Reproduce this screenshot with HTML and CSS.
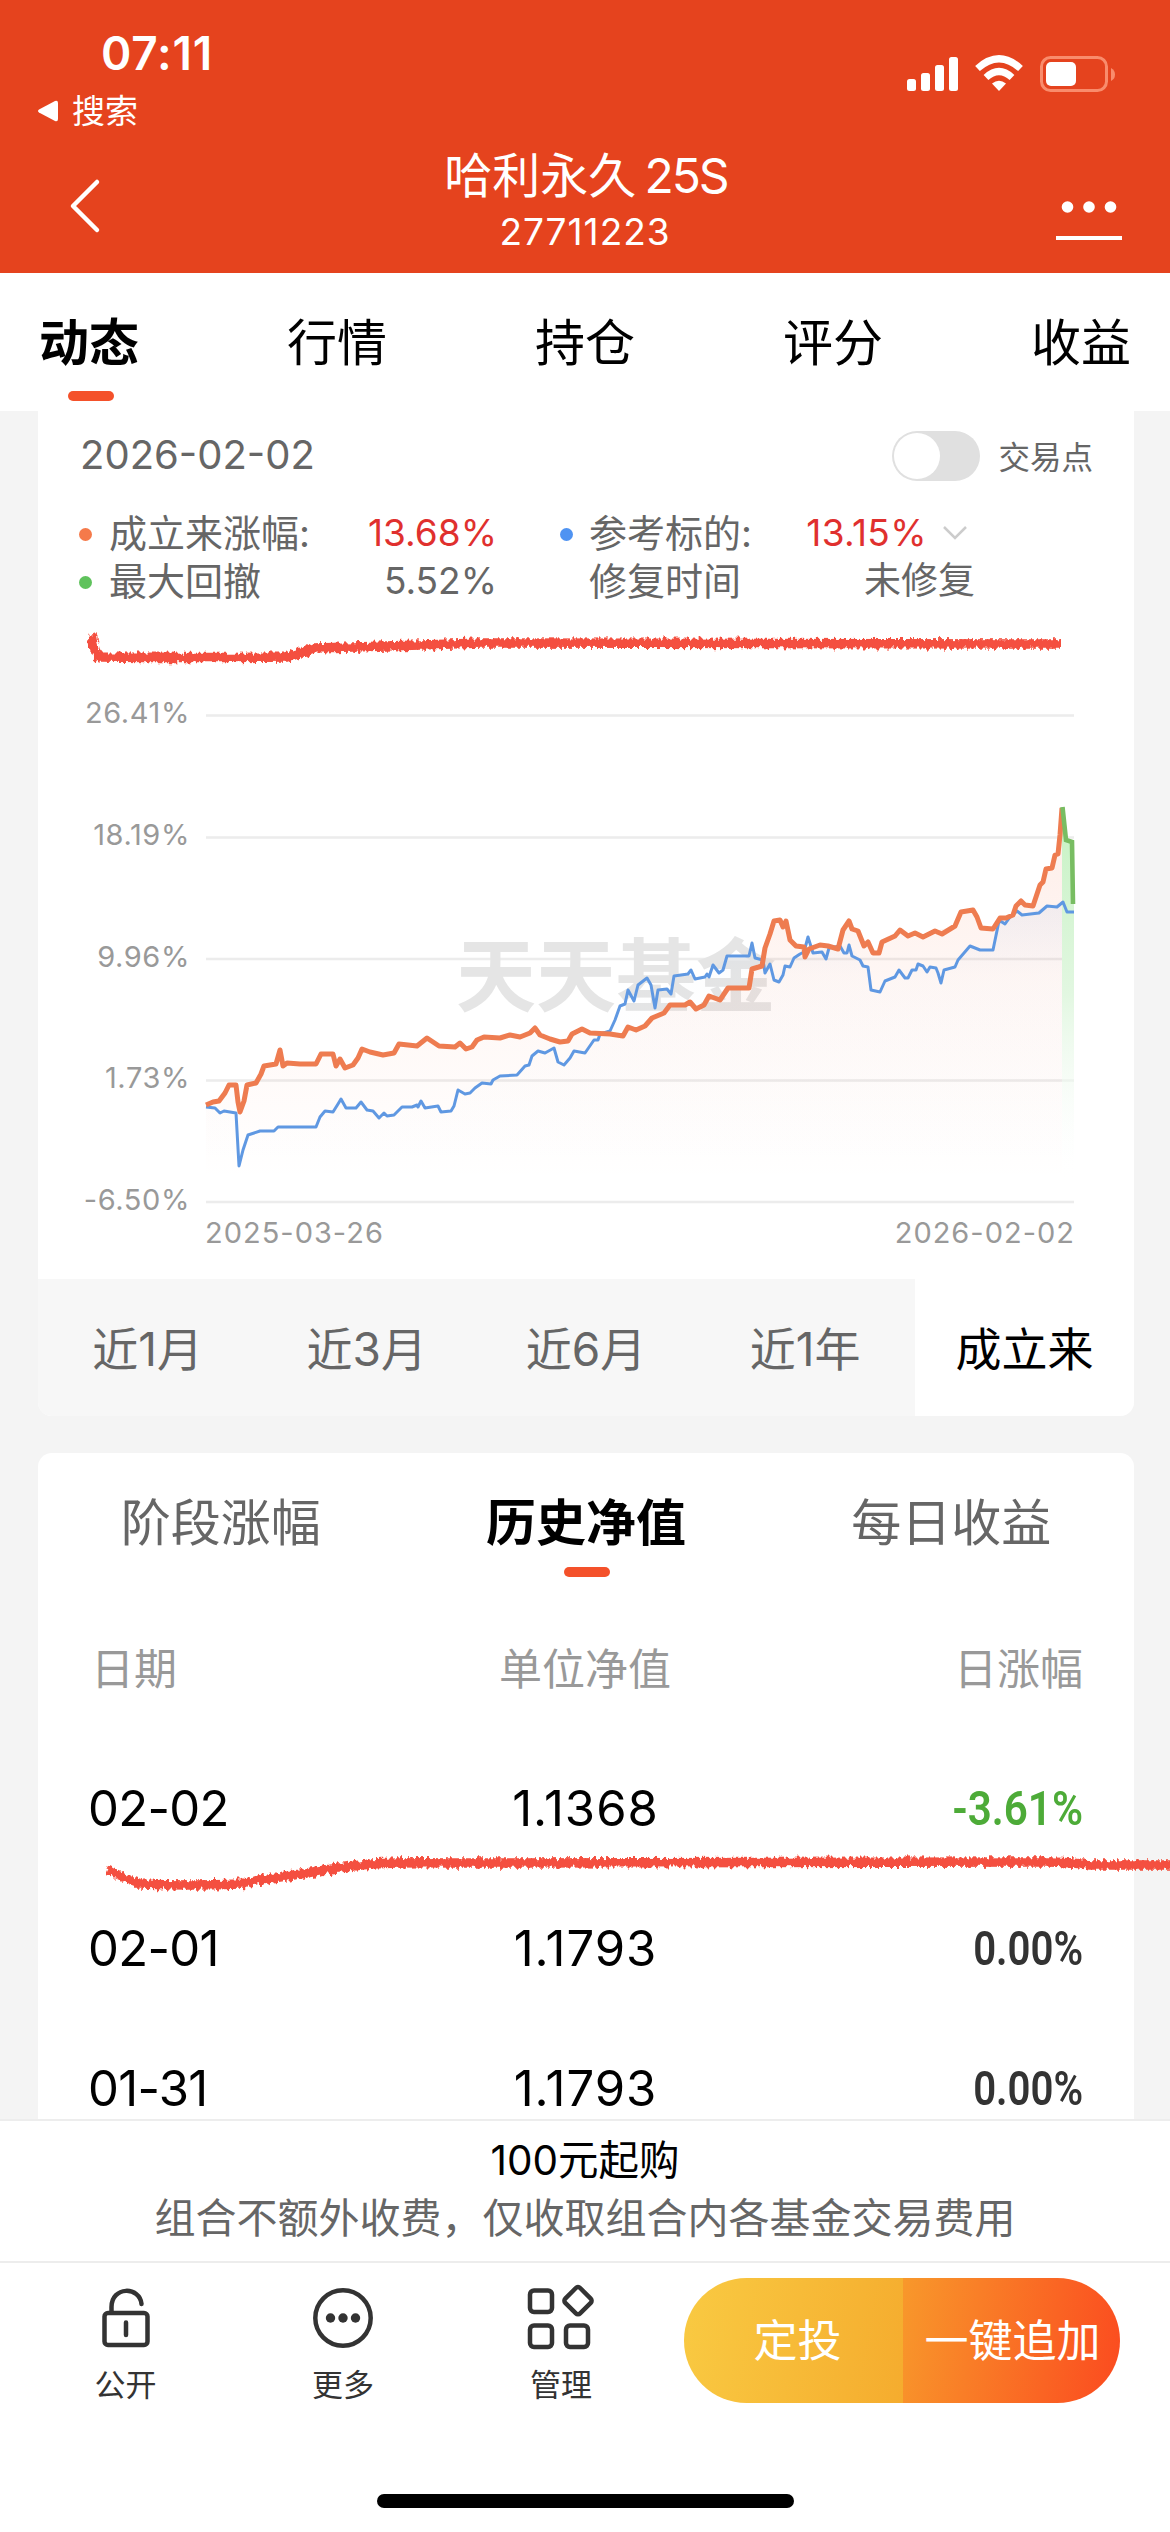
FILE: index.html
```html
<!DOCTYPE html>
<html lang="zh-CN">
<head>
<meta charset="utf-8">
<title>哈利永久 25S</title>
<link rel="stylesheet" href="styles.css">
</head>
<body>
<header class="header">
  <div class="statusbar">
    <div class="status-left">
      <div class="time"><span>07:11</span></div>
      <div class="return-app">
        <svg width="22" height="22" viewBox="0 0 22 22"><path d="M2 9.5 18 1q3-1 3 2v16q0 3-3 2L2 12.500q-2-1.500 0-3z" fill="#fff"/></svg>
        <span>搜索</span>
      </div>
    </div>
    <svg class="status-icons" width="210" height="40" viewBox="906 54 210 40">
      <g fill="#fff">
        <rect x="907" y="79" width="9" height="12" rx="2.500"/>
        <rect x="921" y="73" width="9" height="18" rx="2.500"/>
        <rect x="935" y="65" width="9" height="26" rx="2.500"/>
        <rect x="949" y="57" width="9" height="34" rx="2.500"/>
        <path d="M999 91l-7-7.500q7-5.500 14 0z"/>
      </g>
      <g fill="none" stroke="#fff" stroke-width="7">
        <path d="M977.500 68.500q21.500-19.500 43 0"/>
        <path d="M986 77.500q13-12 26 0"/>
      </g>
      <rect x="1041.500" y="57.500" width="65" height="33" rx="9" fill="none" stroke="#f98c6c" stroke-width="3"/>
      <rect x="1046" y="62" width="30" height="24" rx="5" fill="#fff"/>
      <path d="M1111 68q4 2 4 6.500t-4 6.500z" fill="#f98c6c"/>
    </svg>
  </div>
  <div class="navbar">
    <svg class="back" width="36" height="56" viewBox="0 0 36 56"><path d="M30 4 6 28l24 24" fill="none" stroke="#fff" stroke-width="4.500" stroke-linecap="round" stroke-linejoin="round"/></svg>
    <div class="heading">
      <h1><span>哈利永久</span><span class="n-title">25S</span></h1>
      <p><span class="n-code">27711223</span></p>
    </div>
    <svg class="more" width="66" height="42" viewBox="0 0 66 42"><g fill="#fff"><circle cx="11.500" cy="8" r="5.800"/><circle cx="33" cy="8" r="5.800"/><circle cx="54.500" cy="8" r="5.800"/><rect y="37" width="66" height="4"/></g></svg>
  </div>
</header>

<nav class="tabs">
  <a class="tab active">动态</a><a class="tab">行情</a><a class="tab">持仓</a><a class="tab">评分</a><a class="tab">收益</a>
</nav>

<main class="content">
  <section class="card trend">
    <div class="trend-top">
      <span class="n-date">2026-02-02</span>
      <div class="switch-wrap"><i class="switch"></i><span class="switch-label">交易点</span></div>
    </div>
    <div class="legend">
      <i class="dot orange"></i><span>成立来涨幅:</span><b class="num red"><span>13.68%</span></b>
      <i class="dot blue"></i><span>参考标的:</span><b class="num red ref"><span>13.15%</span><svg width="26" height="16" viewBox="0 0 26 16"><path d="M2 2l11 11L24 2" fill="none" stroke="#ccc" stroke-width="2.500"/></svg></b>
      <i class="dot green"></i><span>最大回撤</span><b class="num"><span>5.52%</span></b>
      <i></i><span>修复时间</span><b class="num">未修复</b>
    </div>
    <svg class="chart" width="1096" height="669" viewBox="38 610 1096 669">
      <defs>
        <linearGradient id="fillOrange" gradientUnits="userSpaceOnUse" x1="0" y1="808" x2="0" y2="1180"><stop offset="0" stop-color="#f7815a" stop-opacity=".14"/><stop offset=".5" stop-color="#f7815a" stop-opacity=".06"/><stop offset="1" stop-color="#f7815a" stop-opacity="0"/></linearGradient>
        <linearGradient id="fillBlue" gradientUnits="userSpaceOnUse" x1="0" y1="900" x2="0" y2="1200"><stop offset="0" stop-color="#5a95e8" stop-opacity=".08"/><stop offset=".25" stop-color="#5a95e8" stop-opacity=".01"/><stop offset="1" stop-color="#5a95e8" stop-opacity="0"/></linearGradient>
        <linearGradient id="fillGreen" gradientUnits="userSpaceOnUse" x1="0" y1="808" x2="0" y2="1180"><stop offset="0" stop-color="#c6f2c3"/><stop offset=".5" stop-color="#e2f7e1"/><stop offset="1" stop-color="#fff" stop-opacity="0"/></linearGradient>
        <filter id="crayon" filterUnits="userSpaceOnUse" x="38" y="600" width="1140" height="1300"><feTurbulence type="fractalNoise" baseFrequency=".3 .1" numOctaves="2" seed="4"/><feDisplacementMap in="SourceGraphic" scale="9" xChannelSelector="R" yChannelSelector="G"/><feGaussianBlur stdDeviation=".7"/></filter>
      </defs>
      <g stroke="#ececec" stroke-width="2.500"><path d="M206 715.500H1074M206 837.500H1074M206 959H1074M206 1080.500H1074M206 1202H1074"/></g>
      <g class="axis">
        <g text-anchor="end"><text x="190" y="723">26.41%</text><text x="190" y="845">18.19%</text><text x="190" y="966.500">9.96%</text><text x="190" y="1088">1.73%</text><text x="190" y="1210">-6.50%</text></g>
        <text x="205" y="1242.500" class="ax-date">2025-03-26</text><text x="1075" y="1242.500" text-anchor="end" class="ax-date">2026-02-02</text>
      </g>
      <text class="watermark" x="456" y="1005">天天基金</text>
      <path fill="url(#fillOrange)" d="M206 1105 213 1102 219 1101 225 1093 229 1085 236 1085 238 1102 240 1112 244 1101 247 1085 256 1083 261 1074 264 1066 276 1064 280 1050 283 1066 287 1063 316 1064 321 1054 333 1054 336 1066 340 1059 345 1068 353 1065 362 1049 383 1055 394 1053 399 1044 417 1046 427 1038 439 1046 455 1047 466 1049 477 1040 500 1038 520 1037 535 1028 540 1035 560 1042 568 1041 582 1029 590 1033 623 1036 628 1027 636 1030 645 1026 652 1018 664 1013 670 1005 690 1002 696 1009 704 1005 709 996 720 1000 728 988 749 988 752 969 762 966 765 948 774 921 786 921 790 940 804 947 805 957 808 950 820 945 838 949 843 930 849 921 858 931 864 946 868 942 873 953 879 953 882 942 900 930 908 936 923 937 935 931 955 926 961 912 973 910 981 928 993 929 1000 918 1013 915 1021 901 1033 906 1046 869 1052 868 1060 835 1062 808V1180H206z"/>
      <path fill="url(#fillBlue)" d="M206 1107 236 1113 239 1166 248 1135 278 1127 316 1127 325 1111 341 1099 379 1118 402 1107 451 1111 458 1090 482 1083 517 1075 538 1051 554 1048 564 1065 574 1051 585 1053 610 1031 620 1006 628 990 634 1001 638 985 647 978 655 1008 658 990 671 994 674 976 705 977 727 956 749 956 763 960 774 980 785 966 800 954 849 945 868 967 871 990 880 992 899 970 955 967 970 946 993 950 999 921 1022 915 1063 902 1074 912V1200H206z"/>
      <path fill="url(#fillGreen)" d="M1062 808 1066 840 1072 842 1074 903V1180H1062z"/>
      <path fill="none" stroke="#5f98e2" stroke-width="3" stroke-linejoin="round" d="M206 1107 215 1108 220 1113 224 1111 236 1113 239 1166 243 1150 248 1135 260 1131 274 1131 278 1127 316 1127 320 1117 325 1111 333 1112 338 1104 341 1099 346 1108 356 1108 361 1102 367 1110 373 1111 379 1118 384 1113 387 1116 394 1115 402 1107 412 1107 417 1105 418 1107 421 1101 425 1108 438 1106 441 1112 451 1111 454 1106 458 1090 465 1094 470 1093 475 1088 482 1083 491 1084 493 1080 500 1076 517 1075 525 1066 529 1065 532 1056 538 1051 545 1053 554 1048 558 1062 564 1065 570 1058 574 1051 585 1053 594 1040 598 1040 600 1034 610 1031 615 1020 620 1006 625 1004 628 990 634 1001 638 985 647 978 651 985 655 1008 658 990 667 989 671 994 674 976 688 974 691 970 695 979 705 977 707 974 709 977 713 965 719 973 723 970 727 956 749 956 752 943 755 958 763 960 765 973 770 964 774 980 779 982 783 975 785 966 790 967 794 958 800 954 804 952 808 937 813 953 822 952 826 959 829 948 840 946 844 953 847 953 849 945 852 956 860 960 863 966 868 967 871 990 880 992 885 981 895 977 899 970 905 978 908 978 912 970 916 970 918 964 923 966 927 972 930 967 936 968 938 973 941 983 944 970 955 967 958 960 970 946 980 950 993 950 999 921 1002 922 1005 924 1010 917 1017 911 1022 915 1039 913 1047 906 1057 907 1063 902 1067 912 1074 912"/>
      <path fill="none" stroke="#ee7c50" stroke-width="5" stroke-linejoin="round" d="M206 1105 213 1102 219 1101 225 1093 229 1085 236 1085 238 1102 240 1112 244 1101 247 1085 256 1083 261 1074 264 1066 276 1064 280 1050 283 1066 287 1063 300 1064 316 1064 321 1054 333 1054 336 1066 340 1059 345 1068 353 1065 358 1058 362 1049 370 1052 383 1055 394 1053 399 1044 417 1046 427 1038 439 1046 455 1047 460 1043 466 1049 472 1047 477 1040 484 1037 500 1038 510 1035 520 1037 530 1033 535 1028 540 1035 550 1039 560 1042 568 1041 572 1034 582 1029 590 1033 610 1034 623 1036 628 1027 636 1030 645 1026 652 1018 664 1013 670 1005 685 1005 690 1002 696 1009 704 1005 709 996 720 1000 728 988 749 988 752 969 762 966 765 948 770 934 774 921 780 920 783 927 786 921 790 940 796 946 804 947 805 957 809 949 820 945 828 946 838 949 843 930 849 921 852 929 858 931 864 946 868 942 873 953 879 953 882 942 895 936 900 930 908 936 915 933 923 937 935 931 942 934 955 926 961 912 973 910 977 917 981 928 993 929 1000 918 1006 918 1013 915 1016 906 1021 901 1025 905 1033 906 1040 885 1043 882 1046 869 1052 868 1055 855 1058 854 1060 835 1062 808"/>
      <path fill="none" stroke="#78bd62" stroke-width="4.600" d="M1062.500 807 1066 840 1072 842 1073 904"/>
      <path class="scribble" filter="url(#crayon)" d="M92 634q4 24 8 23 90 1 186 0 10-2 27-9 80-2 168-5l580 1"/>
    </svg>
    <div class="ranges"><span>近1月</span><span>近3月</span><span>近6月</span><span>近1年</span><span class="on">成立来</span></div>
  </section>

  <section class="card history">
    <div class="subtabs"><span>阶段涨幅</span><span class="on">历史净值</span><span>每日收益</span></div>
    <div class="row head"><span>日期</span><span>单位净值</span><span>日涨幅</span></div>
    <div class="row"><span class="day">02-02</span><span class="value">1.1368</span><span class="din down"><em>-3.61%</em></span></div>
    <div class="row"><span class="day">02-01</span><span class="value">1.1793</span><span class="din"><em>0.00%</em></span></div>
    <div class="row"><span class="day">01-31</span><span class="value">1.1793</span><span class="din"><em>0.00%</em></span></div>
    <svg class="mark" width="1132" height="50" viewBox="38 1850 1132 50"><path class="scribble" filter="url(#crayon)" d="M107 1870q22 10 34 14 50 2 100 0 26-6 60-10 40-7 70-10 40-2 80-1L1050 1862q20 0 40 3h100"/></svg>
  </section>
</main>

<footer class="footer">
  <div class="notice"><p class="buy">100元起购</p><p class="fee">组合不额外收费，仅收取组合内各基金交易费用</p></div>
  <div class="actions">
    <div class="action"><svg width="68" height="68" viewBox="91 2285 68 68"><g fill="none" stroke="#333" stroke-width="4.500" stroke-linecap="round"><rect x="103.500" y="2314" width="43" height="32" rx="3.500"/><path d="M110.500 2313V2308C110.500 2287 139 2287 140.500 2305M125 2323.500V2336"/></g></svg><span>公开</span></div>
    <div class="action"><svg width="68" height="68" viewBox="308 2285 68 68"><circle cx="342" cy="2319" r="27.700" fill="none" stroke="#333" stroke-width="4.500"/><g fill="#333"><circle cx="329.500" cy="2319" r="4.700"/><circle cx="342" cy="2319" r="4.700"/><circle cx="354.500" cy="2319" r="4.700"/></g></svg><span>更多</span></div>
    <div class="action"><svg width="68" height="68" viewBox="526 2285 68 68"><g fill="none" stroke="#333" stroke-width="4.500" stroke-linejoin="round"><rect x="529" y="2291.500" width="22" height="21.500" rx="4"/><rect x="529" y="2326.500" width="22" height="21.500" rx="4"/><rect x="565" y="2326.500" width="22" height="21.500" rx="4"/><rect x="566.500" y="2291.200" width="21" height="21" rx="3" transform="rotate(45 577 2301.700)"/></g></svg><span>管理</span></div>
    <div class="buttons"><button class="plan">定投</button><button class="add">一键追加</button></div>
  </div>
  <i class="home"></i>
</footer>
</body>
</html>
```
FILE: styles.css
```css
* { box-sizing: border-box; margin: 0; padding: 0; }
body { width: 1170px; height: 2532px; display: flex; flex-direction: column; overflow: hidden; background: #f4f4f4; color: #000; font-family: Inter, "Noto Sans CJK SC", sans-serif; }
svg { display: block; flex: none; }
span, p, h1, a { white-space: nowrap; }
em { font-style: normal; display: inline-block; }

.header { flex: none; height: 273px; background: #e5431e; color: #fff; }
.statusbar { display: flex; justify-content: space-between; height: 142px; padding: 30px 54px 0 37px; }
.time { padding-left: 64px; font-size: 46px; font-weight: 600; line-height: 46px; letter-spacing: .8px; }
.return-app { display: flex; align-items: center; gap: 13px; margin-top: 12px; font-size: 33px; line-height: 46px; }
.status-icons { margin-top: 24px; }
.navbar { display: grid; grid-template-columns: 119px 1fr 119px; height: 131px; }
.back { margin: 36px 0 0 67px; }
.more { margin: 57px 0 0 5px; }
.heading { text-align: center; }
.heading h1 { padding-left: 2px; font-size: 48px; font-weight: 400; line-height: 68px; }
.n-title { margin-left: 8px; letter-spacing: -2px; }
.heading p { font-size: 37px; line-height: 44px; letter-spacing: 1px; }

.tabs { flex: none; display: flex; justify-content: space-between; height: 138px; padding: 0 39px; background: #fff; }
.tab { display: flex; flex-direction: column; align-items: center; width: 100px; padding-top: 34px; font-size: 50px; line-height: 72px; }
.tab.active { font-weight: 700; }
.tab.active::after, .subtabs .on::after { content: ""; width: 46px; height: 10px; border-radius: 5px; background: #f4512a; }
.tab.active::after { margin: 12px 0 0 3px; }

.content { flex: none; height: 1708px; padding: 0 36px 0 38px; overflow: hidden; display: flex; flex-direction: column; gap: 37px; }
.card { flex: none; background: #fff; overflow: hidden; }
.trend { height: 1005px; border-radius: 0 0 14px 14px; }
.trend-top { display: flex; justify-content: space-between; align-items: center; height: 90px; padding: 0 41px 0 42px; color: #666; font-size: 40px; }
.n-date { margin-top: -3px; }
.switch-wrap { display: flex; align-items: center; gap: 18px; font-size: 31.5px; }
.switch-label { margin-top: -3px; }
.switch { width: 88px; height: 50px; padding: 2px; border-radius: 25px; background: #e0e0e0; }
.switch::before { content: ""; display: block; width: 46px; height: 46px; border-radius: 50%; background: #fff; }
.legend { display: grid; grid-template-columns: 30px 208px 180px 92px 210px 176px; grid-template-rows: 48px 48px; align-items: center; height: 109px; padding: 8px 0 0 41px; color: #666; font-size: 38px; line-height: 48px; }
.dot { width: 13px; height: 13px; border-radius: 50%; margin-top: 2px; }
.dot.blue { margin-left: 63px; }
.orange { background: #f57a4a; } .blue { background: #4f93f2; } .green { background: #5fc25c; }
.num { font-weight: 400; font-size: 37px; text-align: right; justify-self: end; white-space: nowrap; }
.num.red { color: #e0302e; }
.ref { display: flex; align-items: center; gap: 15px; padding-right: 7px; }
.ref span { letter-spacing: .4px; }
.axis { font-size: 29px; fill: #999; letter-spacing: .6px; }
.ax-date { letter-spacing: 1px; }
.watermark { font: 700 80px "Noto Sans CJK SC", sans-serif; fill: #e5e5e5; }
.scribble { fill: none; stroke: #f4503f; stroke-width: 9.5; stroke-linejoin: round; }
.ranges { display: grid; grid-template-columns: repeat(5, 1fr); height: 137px; background: #f7f7f7; color: #666; font-size: 46px; line-height: 141px; text-align: center; }
.ranges .on { background: #fff; color: #000; }

.history { position: relative; height: 720px; border-radius: 14px 14px 0 0; overflow: visible; }
.subtabs { display: grid; grid-template-columns: repeat(3, 1fr); height: 145px; padding-top: 34px; font-size: 50px; line-height: 72px; color: #666; }
.subtabs span { display: flex; flex-direction: column; align-items: center; }
.subtabs .on { color: #000; font-weight: 700; }
.subtabs .on::after { margin: 8px 0 0 2px; }
.row { display: grid; grid-template-columns: 1fr 1fr 1fr; align-items: center; height: 140px; padding: 0 51px 0 50px; font-size: 49px; }
.row > :nth-child(2) { text-align: center; }
.row > :nth-child(3) { text-align: right; }
.row.head { font-size: 43px; color: #999; padding: 0 51px 5px 53px; }
.row.head > :nth-child(2) { margin-left: -4px; }
.day { letter-spacing: -.7px; }
.value { letter-spacing: 1px; }
.din { color: #333; font-family: Roboto, sans-serif; font-weight: 600; }
.din em { transform: scaleX(.82); transform-origin: right; }
.din.down { color: #4dab38; }
.din.down em { transform: scaleX(.86); }
.mark { position: absolute; left: 0; top: 397px; }

.footer { flex: none; height: 413px; border-top: 2px solid #ededed; background: #fff; }
.notice { height: 142px; padding-top: 12px; border-bottom: 2px solid #ededed; text-align: center; }
.buy { font-size: 40.5px; line-height: 56px; }
.fee { font-size: 41px; line-height: 59px; color: #666; }
.actions { display: grid; grid-template-columns: 217px 218px 218px 436px; height: 226px; padding: 15px 0 0 17px; }
.action { display: flex; flex-direction: column; align-items: center; gap: 10px; padding-top: 6px; color: #333; font-size: 31px; line-height: 46px; }
.buttons { display: grid; grid-template-columns: 219px 217px; height: 125px; margin-left: 14px; width: 436px; border-radius: 63px; overflow: hidden; }
.buttons button { border: 0; color: #fff; font: 44px/121px "Noto Sans CJK SC", sans-serif; white-space: nowrap; }
.plan { padding: 0 0 4px 8px; background: linear-gradient(100deg, #f9ca42, #f5ac2e); }
.add { padding: 0 0 4px 2px; background: linear-gradient(100deg, #f8982b, #fb4a1f); }
.home { display: block; width: 417px; height: 14px; margin: 5px auto 0; border-radius: 7px; background: #000; }
```
